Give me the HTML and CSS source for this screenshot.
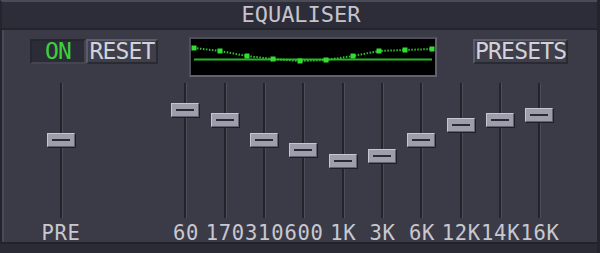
FILE: index.html
```html
<!DOCTYPE html>
<html lang="en">

<head>
    <meta charset="UTF-8">
    <title>Equaliser</title>
    <link rel="stylesheet" href="styles.css">
</head>

<body>

    <div class="eq">
        <header class="titlebar">EQUALISER</header>

        <section class="panel">
            <div class="toolbar">
                <div class="switches">
                    <button class="toggle">ON</button>
                    <button class="btn">RESET</button>
                </div>

                <div class="graph">
                    <svg width="244" height="35" viewBox="0 0 244 35">
                        <line x1="3" y1="19.5" x2="241" y2="19.5" stroke="#27b327" stroke-width="2" />
                        <polyline points="3,8 29,11 56,16 82,19 109,21 135,20 162,16 188,11 214,10 241,9" fill="none" stroke="#2fc42f" stroke-width="2" stroke-dasharray="1.5 1.5" />
                        <g fill="#33dd33">
                            <rect x="0.5" y="5.5" width="5" height="5" />
                            <rect x="26.5" y="8.5" width="5" height="5" />
                            <rect x="53.5" y="13.5" width="5" height="5" />
                            <rect x="79.5" y="16.5" width="5" height="5" />
                            <rect x="106.5" y="18.5" width="5" height="5" />
                            <rect x="132.5" y="17.5" width="5" height="5" />
                            <rect x="159.5" y="13.5" width="5" height="5" />
                            <rect x="185.5" y="8.5" width="5" height="5" />
                            <rect x="211.5" y="7.5" width="5" height="5" />
                            <rect x="238.5" y="6.5" width="5" height="5" />
                        </g>
                    </svg>
                </div>

                <button class="btn presets">PRESETS</button>
            </div>

            <div class="sliders">
                <div class="band pre">
                    <div class="track">
                        <div class="knob" style="top: 50px"></div>
                    </div>
                    <span class="label">PRE</span>
                </div>

                <div class="bands">
                    <div class="band">
                        <div class="track"><div class="knob" style="top: 20px"></div></div>
                        <span class="label">60</span>
                    </div>
                    <div class="band">
                        <div class="track"><div class="knob" style="top: 30px"></div></div>
                        <span class="label">170</span>
                    </div>
                    <div class="band">
                        <div class="track"><div class="knob" style="top: 50px"></div></div>
                        <span class="label">310</span>
                    </div>
                    <div class="band">
                        <div class="track"><div class="knob" style="top: 60px"></div></div>
                        <span class="label">600</span>
                    </div>
                    <div class="band">
                        <div class="track"><div class="knob" style="top: 71px"></div></div>
                        <span class="label">1K</span>
                    </div>
                    <div class="band">
                        <div class="track"><div class="knob" style="top: 66px"></div></div>
                        <span class="label">3K</span>
                    </div>
                    <div class="band">
                        <div class="track"><div class="knob" style="top: 50px"></div></div>
                        <span class="label">6K</span>
                    </div>
                    <div class="band">
                        <div class="track"><div class="knob" style="top: 35px"></div></div>
                        <span class="label">12K</span>
                    </div>
                    <div class="band">
                        <div class="track"><div class="knob" style="top: 30px"></div></div>
                        <span class="label">14K</span>
                    </div>
                    <div class="band">
                        <div class="track"><div class="knob" style="top: 25px"></div></div>
                        <span class="label">16K</span>
                    </div>
                </div>
            </div>
        </section>

        <div class="footer"></div>
    </div>

</body>

</html>
```

FILE: styles.css
```css
* {
    box-sizing: border-box;
}

body {
    margin: 0;
    background-color: #2b2b35;
    font-family: "DejaVu Sans Mono", monospace;
}

.eq {
    width: 600px;
    height: 253px;
    display: flex;
    flex-direction: column;
    background-color: #2b2b35;
    border-right: 3px solid #24242c;
}

.titlebar {
    height: 30px;
    background-color: #2d2d39;
    border-top: 2px solid #4b4b57;
    border-bottom: 2px solid #24242c;
    border-left: 2px solid #24242c;
    color: #c4c4cc;
    font-size: 22px;
    line-height: 26px;
    text-align: center;
    padding-left: 3px;
}

.panel {
    height: 214px;
    background-color: #3b3b47;
    border-left: 2px solid #24242c;
    box-shadow: inset 2px 0 0 #4a4a56;
    border-bottom: 2px solid #22222a;
}

.toolbar {
    display: flex;
    align-items: flex-start;
    padding: 7px 0 0 28px;
    height: 47px;
}

.switches {
    display: flex;
    margin-top: 2px;
}

button {
    font-family: "DejaVu Sans Mono", monospace;
    font-size: 23px;
    letter-spacing: -0.8px;
    line-height: 21px;
    height: 25px;
    padding: 0;
}

.toggle {
    width: 56px;
    background-color: #2c2c38;
    border: 2px solid;
    border-color: #26262e #45454f #45454f #26262e;
    color: #3ccf3c;
}

.btn {
    width: 72px;
    background-color: #3f3f4b;
    border: 2px solid;
    border-color: #5c5c68 #2a2a32 #2a2a32 #5c5c68;
    color: #d2d2da;
}

.graph {
    width: 248px;
    height: 40px;
    margin-left: 31px;
    background-color: #000;
    border: 2px solid;
    border-color: #4e4e5a #62626e #62626e #4e4e5a;
    padding-top: 1px;
}

.graph svg {
    display: block;
}

.presets {
    width: 95px;
    margin-left: 36px;
    margin-top: 2px;
}

.sliders {
    display: flex;
    padding-left: 39px;
    margin-top: 6px;
}

.bands {
    display: grid;
    grid-template-columns: repeat(10, 39.33px);
    margin-left: 85.33px;
}

.band {
    width: 39.33px;
    display: flex;
    flex-direction: column;
    align-items: center;
}

.pre {
    width: 40px;
}

.track {
    position: relative;
    width: 3px;
    height: 135px;
    background-color: #23232a;
    border-right: 1px solid #4e4e5a;
}

.knob {
    position: absolute;
    left: -13px;
    width: 28px;
    height: 14px;
    background-color: #9d9dab;
    border: 1px solid;
    border-color: #c6c6d0 #62626e #62626e #c6c6d0;
    box-shadow: 1px 1px 0 #1e1e26;
}

.knob::after {
    content: "";
    position: absolute;
    left: 4px;
    right: 4px;
    top: 5px;
    height: 2px;
    background-color: #2a2a33;
}

.label {
    color: #c8c8d0;
    font-size: 20.5px;
    letter-spacing: 0.7px;
    line-height: 22px;
    margin-top: 4px;
    white-space: nowrap;
}
```
